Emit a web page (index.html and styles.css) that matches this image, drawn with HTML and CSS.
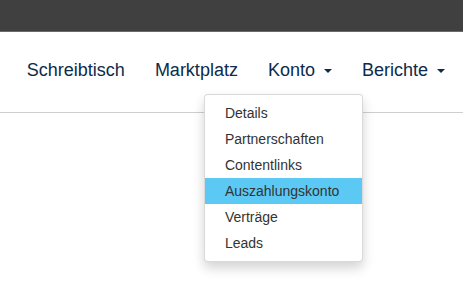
FILE: index.html
```html
<!DOCTYPE html>
<html lang="de">
<head>
  <meta charset="UTF-8">
  <meta name="viewport" content="width=device-width, initial-scale=1.0">
  <title>Konto</title>
  <link rel="stylesheet" href="styles.css">
</head>
<body>
  <div class="topbar"></div>
  <header class="navbar">
    <ul class="nav">
      <li><a href="#">Schreibtisch</a></li>
      <li><a href="#">Marktplatz</a></li>
      <li class="dropdown">
        <a href="#">Konto <span class="caret"></span></a>
        <ul class="dropdown-menu">
          <li><a href="#">Details</a></li>
          <li><a href="#">Partnerschaften</a></li>
          <li><a href="#">Contentlinks</a></li>
          <li class="active"><a href="#">Auszahlungskonto</a></li>
          <li><a href="#">Verträge</a></li>
          <li><a href="#">Leads</a></li>
        </ul>
      </li>
      <li><a href="#">Berichte <span class="caret"></span></a></li>
    </ul>
  </header>
</body>
</html>
```

FILE: styles.css
```css
html, body {
  min-height: 100vh;
}

body {
  margin: 0;
  font-family: "Liberation Sans", Arial, sans-serif;
  background: #fff;
}

.topbar {
  height: 31px;
  background: #404040;
  border-bottom: 1px solid #6a6a6a;
}

.navbar {
  height: 80px;
  border-bottom: 1px solid #cfcfcf;
  display: flex;
  justify-content: flex-end;
  align-items: center;
  padding-right: 3px;
}

.nav {
  list-style: none;
  margin: 0;
  padding: 0;
  display: flex;
}

.nav > li {
  position: relative;
}

.nav > li > a {
  display: block;
  padding: 8px 15px 11px;
  font-size: 18px;
  color: #0b2c4b;
  text-decoration: none;
}

.caret {
  display: inline-block;
  width: 0;
  height: 0;
  margin-left: 4px;
  vertical-align: middle;
  border-top: 4px solid;
  border-left: 4px solid transparent;
  border-right: 4px solid transparent;
}

.dropdown-menu {
  position: absolute;
  z-index: 10;
  top: 42px;
  left: -49px;
  width: 157px;
  list-style: none;
  margin: 0;
  padding: 5px 0;
  background: #fff;
  border: 1px solid rgba(0, 0, 0, 0.15);
  border-radius: 4px;
  box-shadow: 0 6px 12px rgba(0, 0, 0, 0.175);
}

.dropdown-menu a {
  display: block;
  padding: 3px 20px;
  line-height: 20px;
  font-size: 14px;
  color: #333;
  text-decoration: none;
}

.dropdown-menu .active a {
  background: #5bc9f3;
}
```
